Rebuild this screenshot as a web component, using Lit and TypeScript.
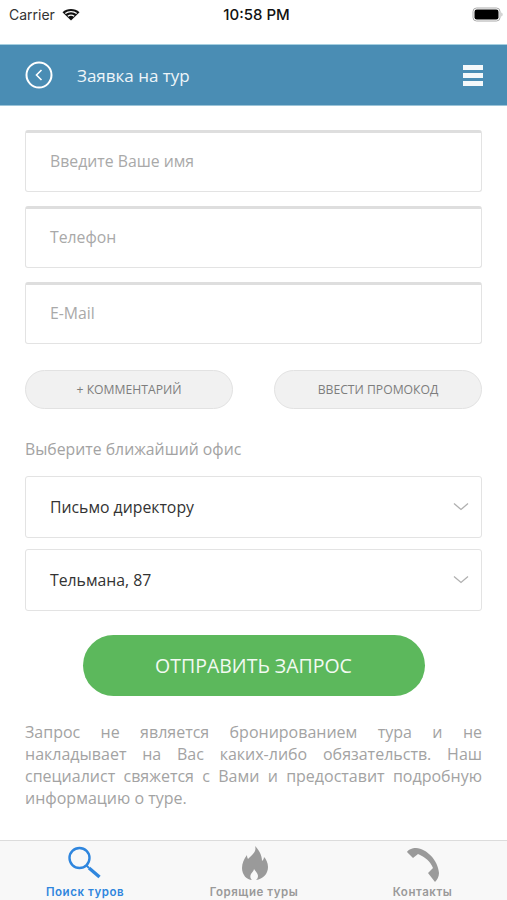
import { css, html, LitElement } from "lit";
import { customElement } from "lit/decorators.js";

@customElement("app-root")
export class AppRoot extends LitElement {
    static override styles = css`
    :host {
      display: flex;
      flex-direction: column;
      width: 507px;
      height: 900px;
      overflow: hidden;
      background: #fff;
      font-family: "Open Sans", sans-serif;
    }
    .status {
      height: 44px;
      flex: none;
      display: grid;
      grid-template-columns: 1fr auto 1fr;
      align-items: center;
      padding: 0 3px 16px 9px;
      box-sizing: border-box;
      font-family: Inter, sans-serif;
      font-size: 14px;
      color: #111;
    }
    .carrier {
      display: flex;
      align-items: center;
      gap: 7px;
      color: #333;
    }
    .time {
      font-weight: 500;
      font-size: 15px;
    }
    .battery {
      justify-self: end;
    }
    .nav {
      height: 62px;
      flex: none;
      box-sizing: border-box;
      display: flex;
      align-items: center;
      padding: 0 24px 0 25px;
      background: #4a8db4;
      border-top: 1px solid #a5cfe0;
      border-bottom: 1px solid #9cc4d8;
      color: #eef5f9;
      font-size: 17px;
    }
    .nav .title {
      margin-left: 24px;
      flex: 1;
    }
    .form {
      flex: 1;
      display: flex;
      flex-direction: column;
      padding: 24px 25px 0;
    }
    .field {
      height: 62px;
      flex: none;
      box-sizing: border-box;
      display: flex;
      align-items: center;
      justify-content: space-between;
      padding: 0 12px 3px 24px;
      border: 1px solid #e3e3e3;
      border-radius: 3px;
      font-size: 15.8px;
      color: #a9a9a9;
    }
    .field.input {
      border-top: 3px solid #dedede;
      margin-bottom: 14px;
    }
    .field.select {
      padding-bottom: 1px;
      color: #333;
      margin-bottom: 11px;
    }
    .buttons {
      display: flex;
      justify-content: space-between;
      margin-top: 12px;
    }
    .pill {
      width: 208px;
      height: 39px;
      box-sizing: border-box;
      display: flex;
      align-items: center;
      justify-content: center;
      border: 1px solid #e2e2e2;
      border-radius: 20px;
      background: #f1f1f1;
      font-size: 12.2px;
      color: #7d7d7d;
    }
    .label {
      margin: 29px 0 16px;
      font-size: 15.8px;
      line-height: 22px;
      color: #a3a3a3;
    }
    .submit {
      align-self: center;
      width: 342px;
      height: 61px;
      margin-top: 13px;
      display: flex;
      align-items: center;
      justify-content: center;
      border-radius: 31px;
      background: #5cb85c;
      color: #f2faf2;
      font-size: 19.5px;
    }
    .note {
      margin: 25px 0 0;
      font-size: 16px;
      line-height: 22px;
      color: #a3a3a3;
      text-align: justify;
    }
    .tabs {
      height: 60px;
      flex: none;
      box-sizing: border-box;
      display: grid;
      grid-template-columns: 170px 168px 169px;
      background: #f8f8f8;
      border-top: 1px solid #dcdcdc;
      font-family: Inter, sans-serif;
      font-size: 11.5px;
      font-weight: 600;
      letter-spacing: 0.55px;
      color: #9a9a9a;
    }
    .tab {
      display: flex;
      flex-direction: column;
      align-items: center;
      padding-top: 5px;
    }
    .tab svg {
      height: 36px;
      display: block;
    }
    .tab span {
      line-height: 14px;
      margin-top: 3px;
    }
    .tab.active {
      color: #2f86de;
    }
  `;

    private _chevron() {
        return html`<svg width="16" height="9" viewBox="0 0 16 9" fill="none" stroke="#b0b0b0" stroke-width="1.3">
      <path d="M1 1.5 8 7.5 15 1.5" />
    </svg>`;
    }

    override render() {
        return html`
      <div class="status">
        <div class="carrier">
          Carrier
          <svg width="18" height="13" viewBox="0 0 18 13">
            <path d="M9 12.5 0.5 4.2C5.2 -0.2 12.8 -0.2 17.5 4.2Z" fill="#111" />
            <path d="M3.300 5.600C6.500 3 11.500 3 14.700 5.600" stroke="#fff" stroke-width="1.300" fill="none" />
            <path d="M5.800 8.300C7.600 6.900 10.400 6.900 12.200 8.300" stroke="#fff" stroke-width="1.300" fill="none" />
          </svg>
        </div>
        <div class="time">10:58 PM</div>
        <svg class="battery" width="32" height="15" viewBox="0 0 32 15">
          <rect x="1" y="1" width="27" height="13" rx="3.5" fill="none" stroke="#aaa" />
          <rect x="2.5" y="2.5" width="24" height="10" rx="2.2" fill="#000" />
          <path d="M29.5 5.5c1.2.3 1.2 3.7 0 4z" fill="#aaa" />
        </svg>
      </div>
      <div class="nav">
        <svg width="28" height="28" viewBox="0 0 28 28" fill="none" stroke="#fff">
          <circle cx="14" cy="14" r="12.5" stroke-width="2" />
          <path d="M16.5 9 11.5 14 16.5 19" stroke-width="1.6" />
        </svg>
        <div class="title">Заявка на тур</div>
        <svg width="20" height="21" viewBox="0 0 20 21" fill="#f4f8fa">
          <rect width="20" height="5" y="0" />
          <rect width="20" height="5" y="8" />
          <rect width="20" height="5" y="16" />
        </svg>
      </div>
      <div class="form">
        <div class="field input">Введите Ваше имя</div>
        <div class="field input">Телефон</div>
        <div class="field input">E-Mail</div>
        <div class="buttons">
          <div class="pill">+ КОММЕНТАРИЙ</div>
          <div class="pill">ВВЕСТИ ПРОМОКОД</div>
        </div>
        <div class="label">Выберите ближайший офис</div>
        <div class="field select">Письмо директору ${this._chevron()}</div>
        <div class="field select">Тельмана, 87 ${this._chevron()}</div>
        <div class="submit">ОТПРАВИТЬ ЗАПРОС</div>
        <p class="note">
          Запрос не является бронированием тура и не накладывает на Вас каких-либо обязательств. Наш
          специалист свяжется с Вами и предоставит подробную информацию о туре.
        </p>
      </div>
      <div class="tabs">
        <div class="tab active">
          <svg width="36" height="36" viewBox="0 0 36 36" fill="none" stroke="#2f86de">
            <circle cx="12.500" cy="12" r="10" stroke-width="2.400" />
            <path d="M19 19 22 22" stroke-width="2" />
            <path d="M22 22 32.500 31" stroke-width="3.400" />
          </svg>
          <span>Поиск туров</span>
        </div>
        <div class="tab">
          <svg width="32" height="36" viewBox="0 0 32 36">
            <path
              fill="#9a9a9a"
              d="M17 0C19 6 14 9 10 13 9 11 9 10 9 9 6 13 4 17 4 22 4 29 9 34 14 34 12 32 12 30 13 28 14 26 16 25 16 23 17 25 20 27 20 30 20 32 19 33 18 34 25 33 30 28 30 21 30 17 28 13 26 11 26 13 25 14 24 15 24 9 21 4 17 0Z"
            />
          </svg>
          <span>Горящие туры</span>
        </div>
        <div class="tab">
          <svg width="36" height="36" viewBox="0 0 36 36">
            <path
              fill="#9a9a9a"
              d="M2 6C3 4 7 2 11 2 22 3 33 14 34 27 34 31 32 34 30 36L23 27 28 22C25 15 20 11 13 8L8 12Z"
            />
          </svg>
          <span>Контакты</span>
        </div>
      </div>
    `;
    }
}
